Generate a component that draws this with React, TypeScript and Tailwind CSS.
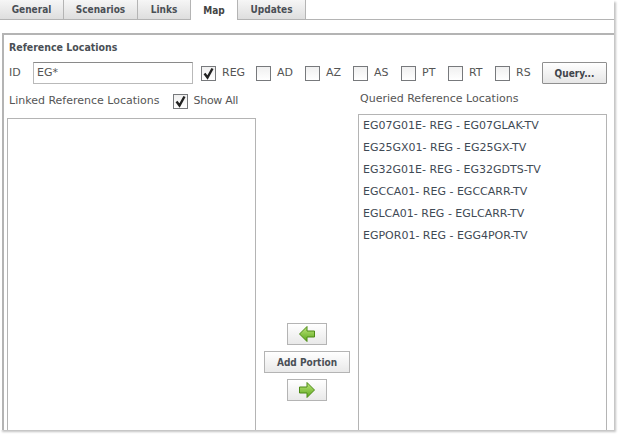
const tabs = [
  { name: 'General', w: 'w-[64px]' },
  { name: 'Scenarios', w: 'w-[74px]' },
  { name: 'Links', w: 'w-[53px]' },
  { name: 'Map', w: 'w-[47px]', active: true },
  { name: 'Updates', w: 'w-[68px]' },
]

const types = [
  { name: 'REG', checked: true, w: 'w-[55px]' },
  { name: 'AD', w: 'w-[49px]' },
  { name: 'AZ', w: 'w-[48px]' },
  { name: 'AS', w: 'w-[48px]' },
  { name: 'PT', w: 'w-[47px]' },
  { name: 'RT', w: 'w-[47px]' },
  { name: 'RS', w: 'w-[47px]' },
]

const queried = [
  'EG07G01E- REG - EG07GLAK-TV',
  'EG25GX01- REG - EG25GX-TV',
  'EG32G01E- REG - EG32GDTS-TV',
  'EGCCA01- REG - EGCCARR-TV',
  'EGLCA01- REG - EGLCARR-TV',
  'EGPOR01- REG - EGG4POR-TV',
]

function Check({ checked }: { checked?: boolean }) {
  return (
    <span className="w-[15px] h-[15px] shrink-0 border border-[#77797c] bg-gradient-to-b from-[#f0f0f0] to-white flex items-center justify-center">
      {checked && (
        <svg width="13" height="13" viewBox="0 0 13 13">
          <path d="M2.5 6.5 L5.5 10.5 L10.5 1.5" fill="none" stroke="#222" strokeWidth="2.4" />
        </svg>
      )}
    </span>
  )
}

function Arrow({ right }: { right?: boolean }) {
  return (
    <svg width="16" height="16" viewBox="0 0 16 16" className={right ? '' : '-scale-x-100'}>
      <defs>
        <linearGradient id="arrowFill" x1="0" y1="0" x2="0" y2="1">
          <stop offset="0" stopColor="#c0e67c" />
          <stop offset="1" stopColor="#5aa81c" />
        </linearGradient>
      </defs>
      <path d="M0.5 5 H8 V0.5 L15.5 8 L8 15.5 V11 H0.5 Z" fill="url(#arrowFill)" stroke="#4d8a17" strokeWidth="1" />
    </svg>
  )
}

export default function App() {
  return (
    <div className="w-[618px] h-[434px] overflow-hidden bg-white text-[11px] text-[#555] font-['DejaVu_Sans','Liberation_Sans',sans-serif]">
      <div className="w-[614px] h-[430px] flex flex-col shadow-[2px_2px_2px_0_#c4c4c4]">
        <div className="flex h-[20px] shrink-0 border-b border-[#b4b4b4] font-['DejaVu_Sans_Condensed','DejaVu_Sans',sans-serif]">
          {tabs.map(t => (
            <div key={t.name} className={`${t.w} flex justify-center border-r border-[#b4b4b4] font-bold text-[10px] ${t.active ? 'h-[20px] bg-white text-[#444] pt-[3px]' : 'bg-gradient-to-b from-[#f6f6f6] to-[#dedede] text-[#4a4f55] pt-[2px]'}`}>
              {t.name}
            </div>
          ))}
        </div>

        <div className="mt-[13px] ml-[2px] flex-1 min-h-0 flex flex-col border-t-2 border-l-2 border-[#b4b4b4] pl-[5px] pr-[7px]">
          <div className="font-bold text-[#4a4f55] text-[10.5px] leading-[13px] mt-[6px] font-['DejaVu_Sans_Condensed','DejaVu_Sans',sans-serif]">Reference Locations</div>

          <div className="flex items-center mt-[8px] h-[22px]">
            <span className="w-[24px] text-[11px]">ID</span>
            <div className="w-[160px] h-[22px] border border-[#b9b9b9] border-t-[#8a8a8a] px-[3px] leading-[19px] text-[11px]">EG*</div>
            <div className="flex ml-[8px]">
              {types.map(t => (
                <label key={t.name} className={`${t.w} flex items-center gap-[6px]`}>
                  <Check checked={t.checked} />
                  <span className="text-[11px]">{t.name}</span>
                </label>
              ))}
            </div>
            <button className="w-[65px] h-[22px] border border-[#8f8f8f] rounded-[1px] font-bold text-[10px] text-[#3f444a] bg-gradient-to-b from-white to-[#e6e6e6] font-['DejaVu_Sans_Condensed','DejaVu_Sans',sans-serif]">Query...</button>
          </div>

          <div className="flex flex-1 min-h-0 mt-[6px]">
            <div className="w-[247px] flex flex-col shrink-0">
              <div className="flex items-center h-[21px] mt-[1px]">
                <span>Linked Reference Locations</span>
                <span className="ml-[13px] mr-[6px]"><Check checked /></span>
                <span className="tracking-[-0.3px]">Show All</span>
              </div>
              <div className="mt-[6px] ml-[-2px] flex-1 border-t border-l border-r border-[#b4b4b4]" />
            </div>

            <div className="w-[102px] shrink-0 flex flex-col items-center justify-end gap-[6px] pb-[29px]">
              <button className="w-[40px] h-[22px] border border-[#b4b4b4] bg-gradient-to-b from-white to-[#e9e9e9] flex items-center justify-center"><Arrow /></button>
              <button className="w-[86px] h-[22px] border border-[#b4b4b4] bg-gradient-to-b from-white to-[#e9e9e9] font-bold text-[10px] text-[#4a4f55] font-['DejaVu_Sans_Condensed','DejaVu_Sans',sans-serif]">Add Portion</button>
              <button className="w-[40px] h-[22px] border border-[#b4b4b4] bg-gradient-to-b from-white to-[#e9e9e9] flex items-center justify-center"><Arrow right /></button>
            </div>

            <div className="flex-1 flex flex-col min-w-0">
              <div className="h-[17px] pt-[1px] pl-[2px]">Queried Reference Locations</div>
              <div className="mt-[7px] flex-1 border-t border-l border-r border-[#b4b4b4] pl-[4px] pt-[2px]">
                {queried.map(q => (
                  <div key={q} className="h-[22px] leading-[18px] text-[#3f4a55] whitespace-nowrap">{q}</div>
                ))}
              </div>
            </div>
          </div>
        </div>
      </div>
    </div>
  )
}
